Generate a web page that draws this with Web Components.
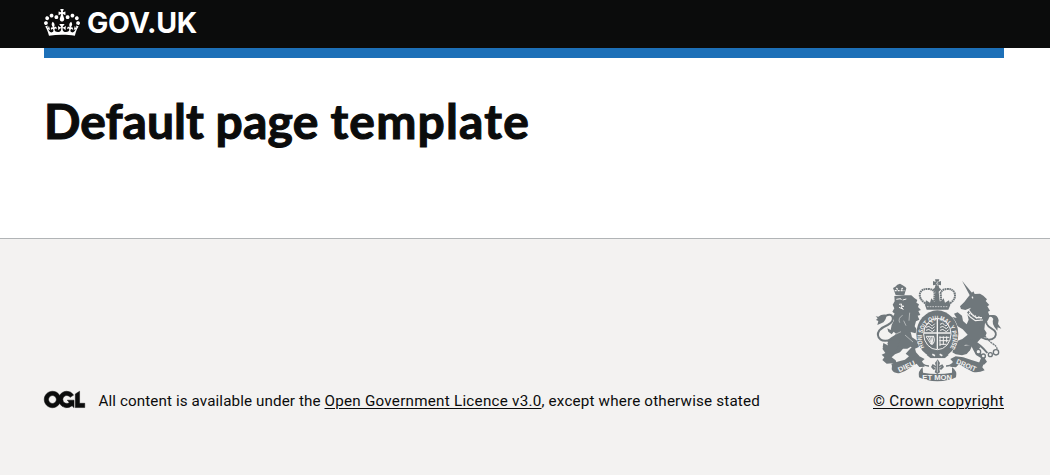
<!DOCTYPE html>
<html lang="en"><head><meta charset="utf-8"><title>Default page template</title>
<style>body{margin:0;background:#f3f2f1;color:#0b0c0c;font-family:Roboto,"Liberation Sans",sans-serif}</style></head>
<body>
<page-template>
<gov-header></gov-header>
<gov-main></gov-main>
<gov-footer></gov-footer>
</page-template>
<script>
const define=(name,html)=>customElements.define(name,class extends HTMLElement{
 constructor(){super();this.attachShadow({mode:'open'}).innerHTML=html}});

/* Text run whose tracking is adjusted to fill a given measure. */
customElements.define('fit-text',class extends HTMLElement{
 constructor(){super();this.attachShadow({mode:'open'}).innerHTML='<style>:host{display:inline;white-space:pre}</style><slot></slot>'}
 connectedCallback(){
  const w=+this.getAttribute('width');
  const n=this.textContent.length;
  this.style.letterSpacing='0px';
  const cur=this.getBoundingClientRect().width;
  this.style.letterSpacing=((w-cur)/n)+'px';
 }});

define('page-template','<style>:host{display:flex;flex-direction:column;min-height:475px}</style><slot></slot>');

define('crown-logo',`<style>:host{display:block;width:36px;height:27px}svg{display:block}</style>
<svg width="36" height="27" viewBox="0 0 132 97" preserveAspectRatio="none" fill="#fff"><path d="M25 30.2c3.5 1.5 7.7-.2 9.1-3.7 1.5-3.6-.2-7.8-3.9-9.2-3.6-1.4-7.6.3-9.1 3.9-1.4 3.5.3 7.5 3.9 9zM9 39.5c3.6 1.5 7.8-.2 9.2-3.7 1.5-3.6-.2-7.8-3.9-9.1-3.6-1.5-7.6.2-9.1 3.8-1.4 3.5.3 7.5 3.8 9zM4.4 57.2c3.5 1.5 7.7-.2 9.1-3.8 1.5-3.6-.2-7.7-3.9-9.1-3.5-1.5-7.6.3-9.1 3.8-1.4 3.5.3 7.6 3.9 9.1zm38.3-21.4c3.5 1.5 7.7-.2 9.1-3.8 1.5-3.6-.2-7.7-3.9-9.1-3.6-1.5-7.6.3-9.1 3.8-1.3 3.6.4 7.7 3.9 9.1zm64.4-5.6c-3.6 1.5-7.8-.2-9.1-3.7-1.5-3.6.2-7.8 3.8-9.2 3.6-1.4 7.7.3 9.2 3.9 1.3 3.5-.4 7.5-3.9 9zm15.9 9.3c-3.6 1.5-7.7-.2-9.1-3.7-1.5-3.6.2-7.8 3.7-9.1 3.6-1.5 7.7.2 9.2 3.8 1.5 3.5-.3 7.5-3.8 9zm4.7 17.7c-3.6 1.5-7.8-.2-9.2-3.8-1.5-3.6.2-7.7 3.9-9.1 3.6-1.5 7.7.3 9.2 3.8 1.3 3.5-.4 7.6-3.9 9.1zM89.3 35.8c-3.6 1.5-7.8-.2-9.2-3.8-1.4-3.6.2-7.7 3.9-9.1 3.6-1.5 7.7.3 9.2 3.8 1.4 3.6-.3 7.7-3.9 9.1zM69.7 17.7l8.9 4.7V9.3l-8.9 2.8c-.2-.3-.5-.6-.9-.9L72.4 0H59.6l3.5 11.2c-.3.3-.6.5-.9.9l-8.8-2.8v13.1l8.8-4.7c.3.3.6.7.9.9l-5 15.4v.1c-.2.8-.4 1.6-.4 2.4 0 4.1 3.1 7.5 7 8.1h.2c.3 0 .7.1 1 .1.4 0 .7 0 1-.1h.2c4-.6 7.1-4.1 7.1-8.1 0-.8-.1-1.7-.4-2.4V34l-5.1-15.4c.4-.2.7-.6 1-.9zM66 92.8c16.9 0 32.8 1.1 47.1 3.2 4-16.9 8.9-26.7 14-33.5l-9.6-3.4c1 4.9 1.1 7.2 0 10.2-1.5-1.4-3-4.3-4.2-8.7L108.6 76c2.8-2 5-3.2 7.5-3.3-4.4 9.4-10 11.9-13.6 11.2-4.3-.8-6.3-4.6-5.6-7.9 1-4.7 5.7-5.9 8-.5 4.3-8.7-3-11.4-7.6-8.8 7.1-7.2 7.9-13.5 2.1-21.1-8 6.1-8.1 12.3-4.5 20.8-4.7-5.4-12.1-2.5-9.5 6.2 3.4-5.2 7.9-2 7.2 3.1-.6 4.3-6.4 7.8-13.5 7.2-10.3-.9-10.9-8-11.2-13.8 2.5-.5 7.1 1.8 11 7.3L80.2 60c-4.1 4.4-8 5.3-12.3 5.4 1.4-4.4 8-11.6 8-11.6H55.5s6.4 7.2 7.9 11.6c-4.2-.1-8-1-12.3-5.4l1.4 16.4c3.9-5.5 8.5-7.7 10.9-7.3-.3 5.8-.9 12.8-11.1 13.8-7.2.6-12.9-2.9-13.5-7.2-.7-5 3.8-8.3 7.1-3.1 2.7-8.7-4.6-11.6-9.4-6.2 3.7-8.5 3.6-14.7-4.6-20.8-5.8 7.6-5 13.9 2.2 21.1-4.7-2.6-11.9.1-7.7 8.8 2.3-5.5 7.1-4.2 8.1.5.7 3.3-1.3 7.1-5.7 7.9-3.5.7-9-1.8-13.5-11.2 2.5.1 4.7 1.3 7.5 3.3l-4.7-15.4c-1.2 4.4-2.7 7.2-4.3 8.7-1.1-3-.9-5.3 0-10.2l-9.5 3.4c5 6.9 9.9 16.7 14 33.5 14.8-2.1 30.8-3.2 47.7-3.2z"/></svg>`);

define('gov-header',`<style>:host{display:block;height:48px;background:#0b0c0c;color:#fff}
.row{display:flex;gap:7px;padding:9px 46px 0 44px}
.name{font:700 28.5px/30px Inter,sans-serif;margin-top:-1px}</style>
<div class="row"><crown-logo></crown-logo><div class="name"><fit-text width="110">GOV.UK</fit-text></div></div>`);

define('gov-main',`<style>:host{display:flow-root;height:190px;background:#fff;padding:0 46px 0 44px}
.bar{height:10px;background:#1d70b8}
h1{margin:38px 0 0;font:700 48px/50px Lato,sans-serif;white-space:nowrap;-webkit-text-stroke:1.1px #0b0c0c}</style>
<div class="bar"></div><h1><fit-text width="171.5">Default </fit-text><fit-text width="115">page </fit-text><fit-text width="199.5">template</fit-text></h1>`);

define('ogl-logo',`<style>:host{display:block;width:41px;height:17px;flex:none}svg{display:block;overflow:visible}</style>
<svg width="41" height="17" viewBox="-3 -3 489.2 201.7" preserveAspectRatio="none" fill="#0b0c0c" stroke="#0b0c0c" stroke-width="6"><path d="M421.5 142.8V.1l-50.7 32.3v161.1h112.4v-50.7zm-122.3-9.6A47.12 47.12 0 0 1 221 97.8c0-26 21.1-47.1 47.1-47.1 16.7 0 31.4 8.7 39.7 21.8l42.7-27.2A97.63 97.63 0 0 0 268.1 0c-36.5 0-68.3 20.1-85.1 49.7A98 98 0 0 0 97.8 0C43.9 0 0 43.9 0 97.8s43.9 97.8 97.8 97.8c36.5 0 68.3-20.1 85.1-49.7a97.76 97.76 0 0 0 149.6 25.4l19.4 22.2h3v-87.8h-80l24.3 27.5zM97.8 145c-26 0-47.1-21.1-47.1-47.1s21.1-47.1 47.1-47.1 47.1 21.1 47.1 47.1S123.8 145 97.8 145"/></svg>`);

define('royal-arms',`<style>:host{display:block;width:136px;height:112px}svg{display:block}text{font-family:"Liberation Sans",sans-serif;font-weight:700}</style>
<svg width="136" height="112" viewBox="0 0 408 336" fill="#6f777b">
<!-- lion -->
<path d="M77 63 69 42 76 38 82 32 90 29 98 34 106 39 109 43 103 63Z"/>
<path d="M74 50h29M79 42l6 6M98 42l-5 6" stroke="#f3f2f1" stroke-width="4" stroke-dasharray="6 3" fill="none"/>
<path d="M73 66 100 64 124 64 133 72 142 78 139 86 147 91 144 99 153 108 145 111 151 123 143 125 148 137 138 142 134 157 142 169 136 178 122 174 126 190 144 202 148 218 135 224 122 218 112 224 99 224 90 235 75 241 65 250 77 259 81 270 67 268 50 269 37 258 43 250 35 242 46 237 37 224 45 216 56 222 52 208 60 202 71 205 70 191 78 179 71 173 65 181 55 173 52 163 62 168 65 153 72 139 67 130 74 119 67 113 73 103 68 92 74 82Z"/>
<path d="M80 180 91 196 82 224 65 239 50 232 38 220 40 207 56 215 52 199 64 190Z"/>
<path d="M132 212 138 235 148 246 141 257 123 261 105 257 117 247 107 239 115 230Z"/>
<path d="M79 76l13-2 2 4M98 78l11-3M87 91l8-1-2 5 9 2-9 2 7 7-13-6" stroke="#f3f2f1" stroke-width="3" fill="none"/>
<path d="M98 124q-15 8-9 22M119 116l-2 24M78 180l15-7M105 183l24 21M101 140l7 15" stroke="#f3f2f1" stroke-width="1.5" fill="none"/>
<path d="M66 196Q43 205 31 196 18 184 28 169 36 160 53 153 72 143 68 129 62 117 47 126" fill="none" stroke="#6f777b" stroke-width="6"/>
<path d="M50 122Q35 119 25 128L17 127 23 133 18 138 25 141 22 153 34 148Q48 142 50 122Z"/>
<!-- unicorn -->
<path d="M276 20 307 58 300 65 296 58Z"/>
<path d="M292 72 302 60 310 52 314 60 330 59 340 65 351 76 347 81 358 93 352 97 360 110 354 113 359 127 354 139 345 148 343 166 350 177 345 190 333 193 320 207 331 219 323 232 335 240 348 244 345 254 351 263 342 272 327 267 333 252 318 243 310 228 303 214 287 212 268 225 253 223 247 213 256 203 277 195 293 182 278 166 263 157 248 151 240 140 247 129 260 132 252 119 263 115 276 125 279 141 290 151 296 137 291 116 303 101 286 108 273 105 270 97 283 84Z"/>
<path d="M306 68l3 5M296 108l10 13 12 10 18 0M291 118l11 12 14 10 23-2" fill="none" stroke="#f3f2f1" stroke-width="3.5"/>
<path d="M297 119l6-2 4 8 8-1 3 8 8-3 7 6" fill="none" stroke="#f3f2f1" stroke-width="5" stroke-dasharray="4 4"/>
<path d="M335 190Q360 204 374 190 385 175 364 163 344 151 349 134 355 122 368 127" fill="none" stroke="#6f777b" stroke-width="5.5"/>
<path d="M361 124Q382 118 386 139L384 150 394 164 383 160 382 170Q362 149 370 135Z"/>
<path d="M253 218 247 235 257 241 276 244 290 240 300 229 308 212Z"/>
<g fill="#f3f2f1" stroke="#6f777b" stroke-width="4"><circle cx="325" cy="233" r="7"/><circle cx="340" cy="246" r="6"/><circle cx="361" cy="242" r="6"/><circle cx="378" cy="235" r="8"/></g>
<path d="M330 158Q342 190 368 209 382 218 381 226" fill="none" stroke="#6f777b" stroke-width="4" stroke-dasharray="6 2"/>
<path d="M303 196q29 16 49 41" fill="none" stroke="#6f777b" stroke-width="6"/>
<!-- crown -->
<path d="M166 88Q146 74 150 58 155 43 177 45 192 46 194 58L192 87M240 88Q259 74 254 58 249 43 229 45 214 47 212 58L214 87" fill="none" stroke="#6f777b" stroke-width="6" stroke-dasharray="5 1.5"/>
<path d="M195 16h13l-3 8 8-3v13l-8-2 3 10 6 4-8 7 3 27h-16l3-27-8-7 6-4 3-10-8 2V21l8 3Z"/>
<path d="M165 93 168 79 180 86 184 73 193 84 202 70 211 84 221 73 225 86 237 79 241 93 235 107 170 107Z"/>
<path d="M171 98h63M198 28h9M202 22v14" fill="none" stroke="#f3f2f1" stroke-width="2" stroke-dasharray="5 3"/>
<!-- garter and shield -->
<ellipse cx="202" cy="180" rx="64" ry="72" fill="#f3f2f1"/>
<ellipse cx="202" cy="180" rx="63" ry="71"/>
<ellipse cx="202" cy="180" rx="41" ry="47" fill="none" stroke="#f3f2f1" stroke-width="3"/>
<defs><path id="garter" d="M163 220A46 53 0 1 1 241 220"/></defs>
<text font-size="20" fill="#f3f2f1"><textPath href="#garter" textLength="216" lengthAdjust="spacingAndGlyphs">HONI SOIT QUI MAL Y PENSE</textPath></text>
<path d="M202 134v91M162 177h80" stroke="#f3f2f1" stroke-width="4"/>
<g fill="none" stroke="#f3f2f1" stroke-width="3">
<path d="M169 151q9-7 13 1t12-3M168 160q10-6 14 1t12-3M168 169q10-6 14 1t12-3M210 151q9-7 13 1t12-3M210 160q10-6 14 1t12-3M210 169q10-6 14 1t12-3" />
<path d="M210 187v29M220 187v25M230 187v18M208 190h30M208 200h28M209 211h21"/>
<path d="M169 189q8 12 15 23M175 187l11 24M182 187l4 24M189 187l-3 24M168 187h24M191 187q6 16-5 25"/></g>
<path d="M178 235h50l8 8-12 10h-42l-12-10Z"/><path d="M187 241l8 4M209 241l8 4" stroke="#f3f2f1" stroke-width="5"/>
<!-- motto ribbon -->
<path d="M158 253h88v27h-88Z" fill="#f3f2f1"/>
<path d="M203 256 210 267 207 276 217 271 222 279 214 287 208 286 210 295 202 300 194 295 197 286 190 287 183 279 188 270 198 276 195 267Z"/>
<path d="M202 260v35M191 278l7 5M214 278l-7 5" fill="none" stroke="#f3f2f1" stroke-width="2"/>
<path d="M64 269Q85 262 105 257 128 250 147 246L164 255 156 262 164 278 148 279 140 269Q128 274 119 282 105 293 90 297 71 300 65 286 68 276 64 269Z"/>
<path d="M341 269Q321 263 302 257 280 248 257 247L241 255 249 264 240 278 258 280 267 270 285 281 309 294Q326 297 344 289L337 280Z"/>
<path d="M158 280Q143 291 147 310 168 321 202 322 237 321 258 310 263 291 246 280L246 296Q202 304 159 296Z"/>
<path d="M146 253Q155 277 177 276M258 253Q250 277 228 276" fill="none" stroke="#6f777b" stroke-width="4"/>
<g fill="#f3f2f1"><text x="88" y="295" font-size="21" textLength="54" lengthAdjust="spacingAndGlyphs" transform="rotate(-25 88 295)">DIEU</text>
<text x="157" y="317" font-size="20" textLength="89" lengthAdjust="spacingAndGlyphs">ET MON</text>
<text x="257" y="268" font-size="21" textLength="63" lengthAdjust="spacingAndGlyphs" transform="rotate(23 257 268)">DROIT</text></g>
</svg>`);

define('gov-footer',`<style>:host{display:block;flex:1;border-top:1px solid #b1b4b6;background:#f3f2f1}
.row{display:flex;align-items:flex-end;padding:35px 46px 0 44px;font-size:15.2px;line-height:20px;white-space:nowrap}
ogl-logo{margin:0 13.5px 3px 0}
a{color:inherit;text-decoration:underline;text-decoration-thickness:1px;text-underline-offset:2px}
.copy{margin-left:auto;display:flex;flex-direction:column;align-items:flex-end;gap:5px}
royal-arms{margin-right:-2px}</style>
<div class="row"><ogl-logo></ogl-logo><div><fit-text width="226">All content is available under the </fit-text><a href="#"><fit-text width="217">Open Government Licence v3.0</fit-text></a><fit-text width="218.5">, except where otherwise stated</fit-text></div>
<div class="copy"><royal-arms></royal-arms><a href="#"><fit-text width="131">© Crown copyright</fit-text></a></div></div>`);
</script></body></html>
